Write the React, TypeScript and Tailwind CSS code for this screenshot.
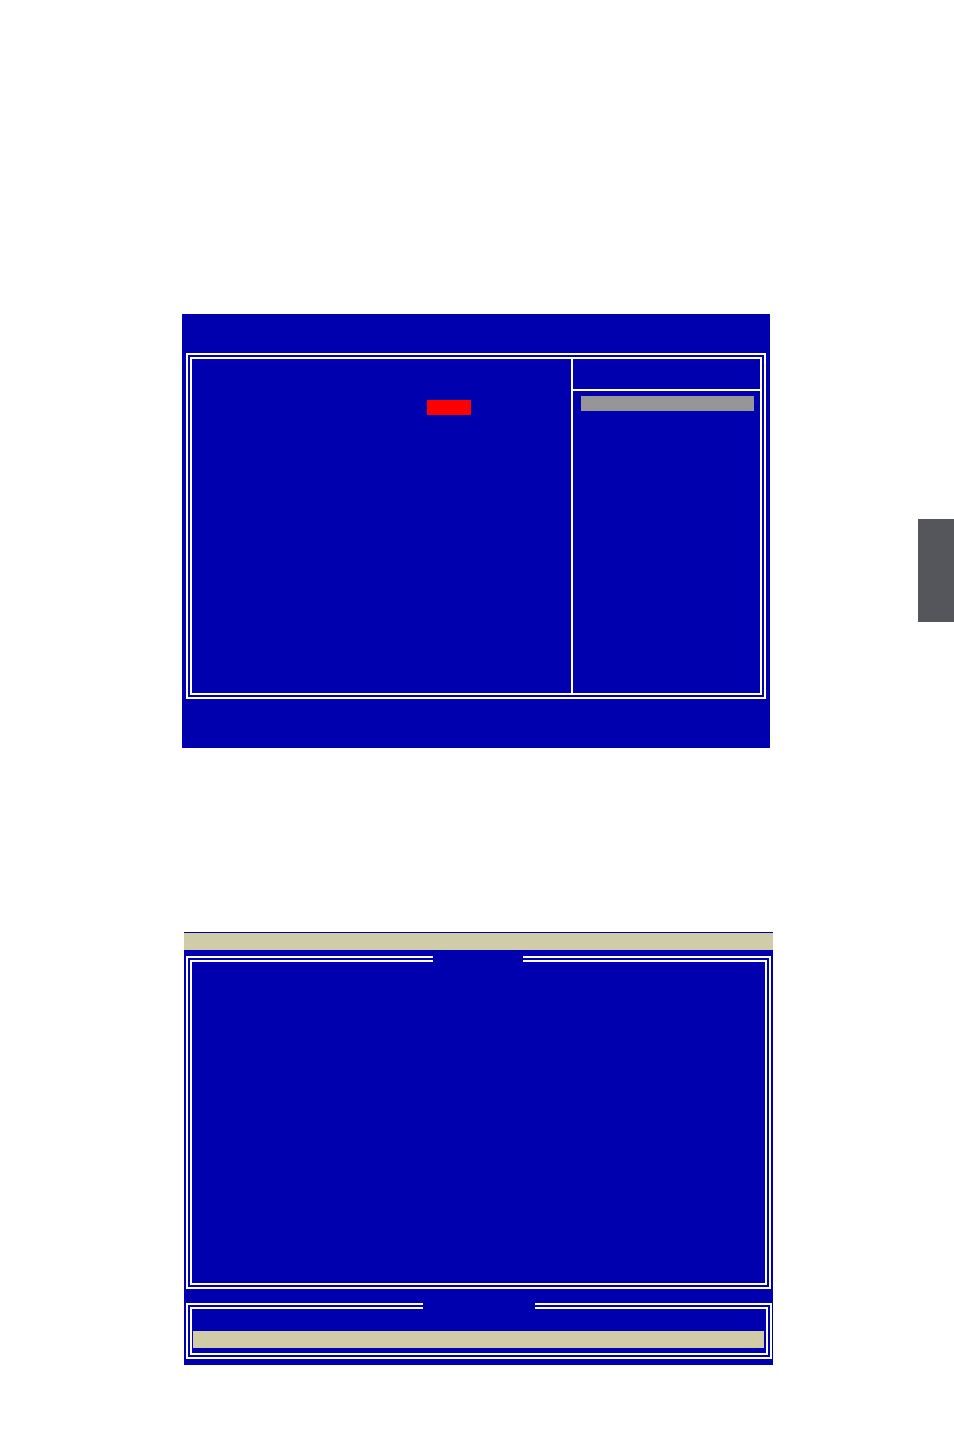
import React from "react";

const BLUE = "bg-[#0000ae]";

function DoubleFrame({
  className = "",
  innerClassName = "",
  children,
  gap,
}: {
  className?: string;
  innerClassName?: string;
  children?: React.ReactNode;
  gap?: { left: string; width: string };
}) {
  return (
    <div className={`relative border-2 border-white p-[2px] ${className}`}>
      <div className={`h-full border-2 border-white ${innerClassName}`}>{children}</div>
      {gap && <span className={`absolute top-[-2px] h-[6px] ${BLUE} ${gap.left} ${gap.width}`} />}
    </div>
  );
}

function SetupScreen() {
  return (
    <div className={`w-[588px] h-[434px] ${BLUE} flex flex-col`}>
      <DoubleFrame className="ml-[4px] mt-[39px] w-[580px] h-[346px]" innerClassName="flex">
        <div className="w-[379px] h-full">
          <div className="ml-[235px] mt-[41px] w-[44px] h-[15px] bg-[#ff0000]" />
        </div>
        <div className="flex-1 h-full border-l-2 border-white flex flex-col">
          <div className="h-[32px] border-b-2 border-white" />
          <div className="ml-[8px] mt-[5px] w-[173px] h-[15px] bg-[#969699]" />
        </div>
      </DoubleFrame>
    </div>
  );
}

function UtilityScreen() {
  return (
    <div className={`w-[589px] h-[433px] ${BLUE} flex flex-col border-t border-[#00008a]`}>
      <div className="h-[17px] bg-[#d0cca8]" />
      <DoubleFrame
        className="ml-[2px] mt-[6px] w-[585px] h-[333px]"
        gap={{ left: "left-[245px]", width: "w-[90px]" }}
      />
      <DoubleFrame
        className="ml-[2px] mt-[14px] w-[586px] h-[56px]"
        innerClassName="flex flex-col"
        gap={{ left: "left-[235px]", width: "w-[112px]" }}
      >
        <div className="ml-[1px] mr-[2px] mt-[22px] h-[17px] bg-[#d0cca8]" />
      </DoubleFrame>
    </div>
  );
}

export default function App() {
  return (
    <div className="w-[954px] h-[1452px] bg-white pt-[314px] font-['Liberation_Sans',sans-serif]">
      <div className="flex items-start pl-[182px]">
        <SetupScreen />
        <div className="ml-[148px] mt-[205px] w-[36px] h-[103px] bg-[#55565b]" />
      </div>
      <div className="ml-[184px] mt-[184px]">
        <UtilityScreen />
      </div>
    </div>
  );
}
